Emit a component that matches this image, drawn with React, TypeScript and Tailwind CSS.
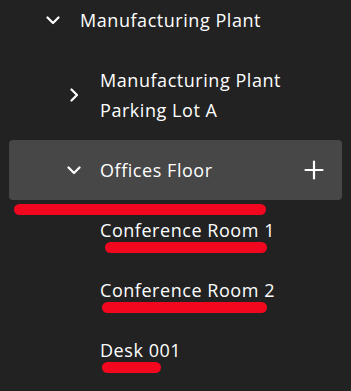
import type { FC, ReactNode } from "react";

const Down: FC = () => (
  <svg width="14" height="14" viewBox="0 0 14 14" fill="none" stroke="#fff" strokeWidth="2.2" strokeLinecap="round" strokeLinejoin="round">
    <path d="M1.5 4.5 7 10l5.5-5.5" />
  </svg>
);

const Right: FC = () => (
  <svg width="14" height="14" viewBox="0 0 14 14" fill="none" stroke="#fff" strokeWidth="2.2" strokeLinecap="round" strokeLinejoin="round">
    <path d="M4.5 1.5 10 7l-5.5 5.5" />
  </svg>
);

const Plus: FC = () => (
  <svg width="20" height="20" viewBox="0 0 20 20" fill="none" stroke="#fff" strokeWidth="2.2" strokeLinecap="round">
    <path d="M10 1.5v17M1.5 10h17" />
  </svg>
);

const Mark: FC<{ className: string }> = ({ className }) => (
  <span className={`absolute h-[11px] rounded-full bg-[#f2071f] ${className}`} />
);

const Row: FC<{ children: ReactNode; className?: string }> = ({ children, className = "" }) => (
  <div className={`relative flex items-center h-[60px] ${className}`}>{children}</div>
);

export default function App() {
  return (
    <div
      className="w-[351px] h-[391px] overflow-hidden bg-[#222222] text-white text-[18px] leading-[30px] tracking-[0.55px]"
      style={{ fontFamily: '"Open Sans", "Noto Sans", sans-serif' }}
    >
      <div className="-mt-[10px] flex flex-col">
        <Row>
          <span className="ml-[46px] w-[34px] flex"><Down /></span>
          <span>Manufacturing Plant</span>
        </Row>

        <div className="relative flex items-center h-[90px]">
          <span className="ml-[67px] w-[33px] flex"><Right /></span>
          <span>
            Manufacturing Plant
            <br />
            Parking Lot A
          </span>
        </div>

        <Row className="mx-[9px] rounded-[4px] bg-[#474747]">
          <span className="ml-[58px] w-[33px] flex"><Down /></span>
          <span className="flex-1">Offices Floor</span>
          <span className="mr-[18px] flex"><Plus /></span>
        </Row>

        <Row>
          <Mark className="left-[14px] top-[4px] w-[252px]" />
          <span className="ml-[100px]">Conference Room 1</span>
          <Mark className="left-[105px] top-[42px] w-[162px]" />
        </Row>

        <Row>
          <span className="ml-[100px]">Conference Room 2</span>
          <Mark className="left-[102px] top-[42px] w-[165px]" />
        </Row>

        <Row>
          <span className="ml-[100px]">Desk 001</span>
          <Mark className="left-[102px] top-[42px] w-[59px]" />
        </Row>
      </div>
    </div>
  );
}
